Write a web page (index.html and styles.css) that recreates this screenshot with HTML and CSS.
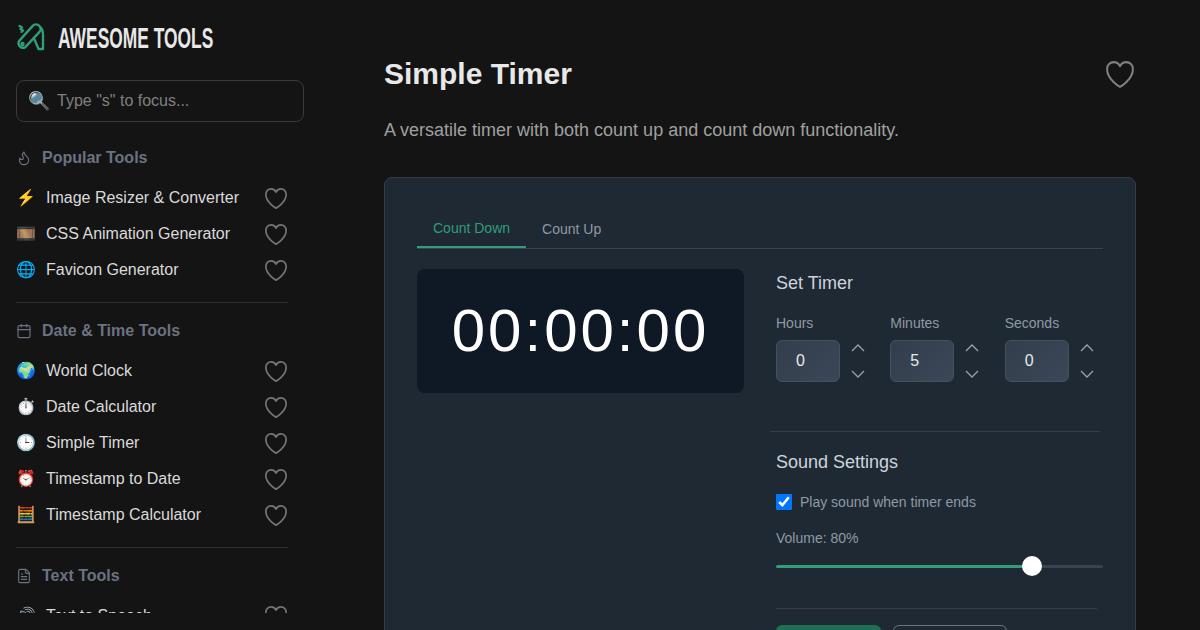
FILE: index.html
```html
<!DOCTYPE html>
<html lang="en">
<head>
<meta charset="utf-8">
<title>Simple Timer</title>
<link rel="stylesheet" href="styles.css">
</head>
<body>
<svg class="defs" width="0" height="0" aria-hidden="true">
  <symbol id="heart" viewBox="2.25 3 19.5 18" preserveAspectRatio="none"><path d="M21 8.250c0-2.485-2.099-4.500-4.688-4.500-1.935 0-3.597 1.126-4.312 2.733-.715-1.607-2.377-2.733-4.313-2.733C5.100 3.750 3 5.765 3 8.250c0 7.220 9 12 9 12s9-4.780 9-12z"/></symbol>
  <symbol id="up" viewBox="0 0 14 8"><path d="M1 7l6-6 6 6"/></symbol>
  <symbol id="down" viewBox="0 0 14 8"><path d="M1 1l6 6 6-6"/></symbol>
</svg>
<div class="app">
  <aside class="sidebar">
    <div class="brand">
      <svg class="brand-mark" viewBox="0 0 30 30" aria-hidden="true">
        <path d="M3.200 17.900L16.700 2.900A4.500 4.500 0 0 1 23.300 9.100L9.300 24.100A4.500 4.500 0 0 1 3.200 17.900Z"/>
        <path d="M24.500 4.500C26.500 6 27 9 27 12V26H22.500L18.500 16.500"/>
        <path d="M3.500 3l2.500 1.500-1.500 1.500 2.500 1.500-1.500 1.500"/>
        <circle cx="6.500" cy="21" r="1"/>
      </svg>
      <span class="brand-name">AWESOME TOOLS</span>
    </div>
    <label class="search">
      <span class="search-icon">🔍</span>
      <input class="search-input" type="text" placeholder="Type &quot;s&quot; to focus...">
    </label>
    <nav class="nav">
      <section class="group">
        <h2 class="group-title">
          <svg class="group-icon" viewBox="0 0 24 24"><path d="M8.500 14.500A2.500 2.500 0 0 0 11 12c0-1.380-.5-2-1-3-1.072-2.143-.224-4.054 2-6 .5 2.500 2 4.900 4 6.500 2 1.600 3 3.500 3 5.500a7 7 0 1 1-14 0c0-1.153.433-2.294 1-3a2.500 2.500 0 0 0 2.500 2.500z"/></svg>
          Popular Tools
        </h2>
        <a class="tool"><span class="emoji">⚡</span><span class="tool-name">Image Resizer &amp; Converter</span><svg class="fav"><use href="#heart"/></svg></a>
        <a class="tool"><span class="emoji">🎞️</span><span class="tool-name">CSS Animation Generator</span><svg class="fav"><use href="#heart"/></svg></a>
        <a class="tool"><span class="emoji">🌐</span><span class="tool-name">Favicon Generator</span><svg class="fav"><use href="#heart"/></svg></a>
      </section>
      <hr class="nav-rule">
      <section class="group">
        <h2 class="group-title">
          <svg class="group-icon" viewBox="0 0 24 24"><path d="M8 2v4M16 2v4M3 10h18"/><rect x="3" y="4" width="18" height="18" rx="2"/></svg>
          Date &amp; Time Tools
        </h2>
        <a class="tool"><span class="emoji">🌍</span><span class="tool-name">World Clock</span><svg class="fav"><use href="#heart"/></svg></a>
        <a class="tool"><span class="emoji">⏱️</span><span class="tool-name">Date Calculator</span><svg class="fav"><use href="#heart"/></svg></a>
        <a class="tool"><span class="emoji">🕒</span><span class="tool-name">Simple Timer</span><svg class="fav"><use href="#heart"/></svg></a>
        <a class="tool"><span class="emoji">⏰</span><span class="tool-name">Timestamp to Date</span><svg class="fav"><use href="#heart"/></svg></a>
        <a class="tool"><span class="emoji">🧮</span><span class="tool-name">Timestamp Calculator</span><svg class="fav"><use href="#heart"/></svg></a>
      </section>
      <hr class="nav-rule">
      <section class="group">
        <h2 class="group-title">
          <svg class="group-icon" viewBox="0 0 24 24"><path d="M15 2H6a2 2 0 0 0-2 2v16a2 2 0 0 0 2 2h12a2 2 0 0 0 2-2V7z"/><path d="M14 2v4a2 2 0 0 0 2 2h4M10 9H8M16 13H8M16 17H8"/></svg>
          Text Tools
        </h2>
        <a class="tool"><span class="emoji">🔊</span><span class="tool-name">Text to Speech</span><svg class="fav"><use href="#heart"/></svg></a>
      </section>
    </nav>
  </aside>
  <main class="main">
    <header class="page-head">
      <h1 class="page-title">Simple Timer</h1>
      <svg class="page-fav"><use href="#heart"/></svg>
    </header>
    <p class="page-desc">A versatile timer with both count up and count down functionality.</p>
    <section class="card">
      <div class="tabs">
        <button class="tab tab-active">Count Down</button>
        <button class="tab">Count Up</button>
      </div>
      <div class="panel">
        <div class="display">00:00:00</div>
        <div class="settings">
          <div class="set-timer">
            <h3 class="settings-title">Set Timer</h3>
            <div class="fields">
              <div class="field">
                <div class="field-label">Hours</div>
                <div class="field-row">
                  <div class="number">0</div>
                  <div class="stepper"><svg class="chev"><use href="#up"/></svg><svg class="chev"><use href="#down"/></svg></div>
                </div>
              </div>
              <div class="field">
                <div class="field-label">Minutes</div>
                <div class="field-row">
                  <div class="number">5</div>
                  <div class="stepper"><svg class="chev"><use href="#up"/></svg><svg class="chev"><use href="#down"/></svg></div>
                </div>
              </div>
              <div class="field">
                <div class="field-label">Seconds</div>
                <div class="field-row">
                  <div class="number">0</div>
                  <div class="stepper"><svg class="chev"><use href="#up"/></svg><svg class="chev"><use href="#down"/></svg></div>
                </div>
              </div>
            </div>
          </div>
          <div class="sound">
            <h3 class="settings-title">Sound Settings</h3>
            <label class="check"><input class="check-box" type="checkbox" checked>Play sound when timer ends</label>
            <div class="volume-label">Volume: 80%</div>
            <input class="volume" type="range" min="0" max="100" value="80">
          </div>
          <div class="actions">
            <button class="btn btn-primary">Start</button>
            <button class="btn btn-outline">Reset</button>
          </div>
        </div>
      </div>
    </section>
  </main>
</div>
</body>
</html>
```
FILE: styles.css
```css
* { box-sizing: border-box; }
html, body { margin: 0; height: 100%; overflow: hidden; }
body { background: #141414; color: #e5e5e5; font-family: "Liberation Sans", Arial, sans-serif; }
.defs { position: absolute; }
.app { display: flex; height: 630px; }

.sidebar { width: 320px; flex: none; height: 630px; padding: 16px 16px 17px; display: flex; flex-direction: column; }
.brand { display: flex; align-items: center; height: 44px; gap: 12px; flex: none; }
.brand-mark { width: 30px; height: 30px; flex: none; fill: none; stroke: #2f9e79; stroke-width: 2.4; stroke-linecap: round; stroke-linejoin: round; }
.brand-name { font-weight: 700; font-size: 29px; line-height: 44px; color: #e8e8e8; white-space: nowrap; transform: scaleX(.6); transform-origin: left center; }
.search { display: flex; align-items: center; height: 42px; margin-top: 20px; padding-left: 11px; gap: 7px; border: 1px solid #3a3a3a; border-radius: 8px; flex: none; }
.search-icon { font-size: 18px; line-height: 1; }
.search-input { flex: 1; min-width: 0; background: none; border: 0; outline: 0; padding: 0; font: 16px "Liberation Sans", sans-serif; color: #ddd; }
.search-input::placeholder { color: #808080; opacity: 1; }

.nav { flex: 1; min-height: 0; overflow: hidden; margin-top: 24px; width: 272px; }
.group-title { display: flex; align-items: center; gap: 10px; height: 24px; margin: 0 0 10px; font-size: 16px; font-weight: 700; color: #6b7280; }
.group-icon { width: 16px; height: 16px; flex: none; fill: none; stroke: #6b7280; stroke-width: 1.7; stroke-linecap: round; stroke-linejoin: round; }
.tool { display: flex; align-items: center; height: 36px; font-size: 16px; color: #dadada; }
.emoji { width: 30px; flex: none; font-size: 16px; line-height: 1; }
.tool-name { flex: 1; min-width: 0; white-space: nowrap; }
.fav { width: 22px; height: 21px; margin-right: 1px; flex: none; fill: none; stroke: #757575; stroke-width: 1.5; stroke-linecap: round; stroke-linejoin: round; }
.nav-rule { border: 0; height: 1px; margin: 14px 0 16px; background: #2e2e2e; }

.main { flex: 1; min-width: 0; padding: 48px 64px 0; }
.page-head { display: flex; align-items: center; justify-content: space-between; height: 52px; }
.page-title { margin: 0; font-size: 30px; line-height: 52px; font-weight: 700; color: #e8e8e8; }
.page-fav { width: 28px; height: 27px; margin-right: 2px; fill: none; stroke: #808080; stroke-width: 1.4; stroke-linecap: round; stroke-linejoin: round; }
.page-desc { margin: 18px 0 0; font-size: 18px; line-height: 24px; color: #a0a0a0; }

.card { margin-top: 35px; padding: 32px; background: #1f2933; border: 1px solid #343d47; border-radius: 8px; }
.tabs { display: flex; height: 39px; border-bottom: 1px solid #3a444f; }
.tab { height: 38px; padding: 0 16px; background: none; border: 0; font: 14px "Liberation Sans", sans-serif; color: #8f99a5; }
.tab-active { height: 38px; padding-bottom: 1px; color: #2f9e79; border-bottom: 2px solid #2f9e79; margin-bottom: -1px; }
.panel { display: grid; grid-template-columns: 1fr 1fr; gap: 32px; margin-top: 20px; align-items: start; }
.display { height: 124px; line-height: 124px; text-align: center; font-size: 60px; letter-spacing: 3px; background: #0f1825; color: #fff; border-radius: 8px; }

.settings-title { margin: 0; font-size: 18px; font-weight: 400; line-height: 28px; color: #ccd4dd; }
.fields { display: grid; grid-template-columns: repeat(3, 1fr); gap: 16px; margin-top: 16px; margin-right: -3px; }
.field-label { font-size: 14px; line-height: 20px; color: #8f99a5; }
.field-row { display: flex; align-items: center; gap: 11px; margin-top: 7px; }
.number { width: 64px; height: 42px; line-height: 40px; padding-left: 19px; font-size: 16px; color: #e5e9ee; background: linear-gradient(135deg, #333e4c, #3b4757); border: 1px solid #465160; border-radius: 6px; }
.stepper { display: flex; flex-direction: column; gap: 18px; }
.chev { display: block; width: 14px; height: 8px; fill: none; stroke: #98a1ac; stroke-width: 1.3; }

.set-timer { padding: 0 0 49px 6px; border-bottom: 1px solid #343e49; margin: 0 3px 0 -6px; }
.sound { padding-top: 16px; }
.check { display: flex; align-items: center; gap: 8px; margin-top: 16px; font-size: 14px; line-height: 20px; color: #8f99a5; }
.check-box { width: 16px; height: 16px; margin: 0; flex: none; }
.volume-label { margin-top: 16px; font-size: 14px; line-height: 20px; color: #8f99a5; }
.volume { display: block; width: 100%; height: 21px; margin: 8px 0 0; padding: 0; -webkit-appearance: none; appearance: none; background: none; outline: 0; }
.volume::-webkit-slider-runnable-track { height: 3px; border-radius: 2px; background: linear-gradient(to right, #2f9e79 78%, #3a424d 78%); }
.volume::-webkit-slider-thumb { -webkit-appearance: none; appearance: none; width: 20px; height: 20px; margin-top: -9px; border-radius: 50%; background: #fff; border: 0; }
.actions { display: flex; gap: 12px; margin-top: 31px; padding-top: 16px; margin-right: 6px; border-top: 1px solid #343e49; }
.btn { height: 42px; border-radius: 6px; font: 14px "Liberation Sans", sans-serif; }
.btn-primary { width: 105px; background: #1f6f55; border: 0; color: #fff; }
.btn-outline { width: 114px; background: none; border: 1px solid #6b7580; color: #ccd4dd; }
```
